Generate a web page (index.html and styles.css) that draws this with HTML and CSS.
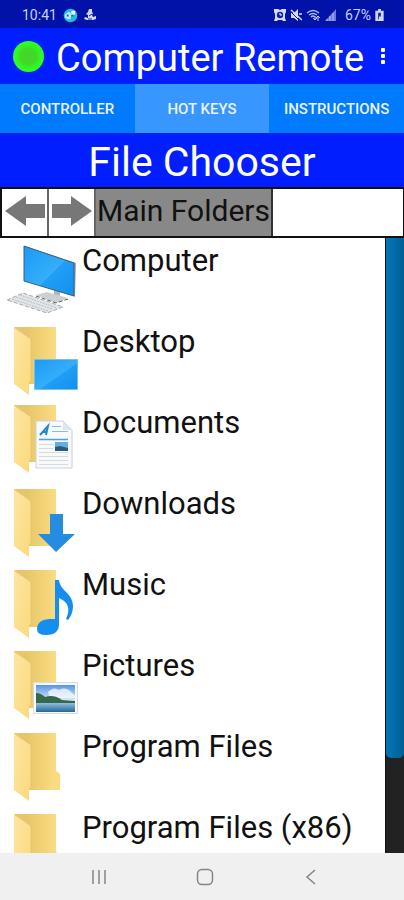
FILE: index.html
```html
<!DOCTYPE html>
<html lang="en">
<head>
<meta charset="utf-8">
<meta name="viewport" content="width=device-width, initial-scale=1">
<title>Computer Remote</title>
<link rel="stylesheet" href="styles.css">
</head>
<body>
<svg class="defs" aria-hidden="true">
  <defs>
    <linearGradient id="back" x1="0" y1="0" x2="1" y2="0"><stop offset=".3" stop-color="#e6c668"/><stop offset="1" stop-color="#fbdc83"/></linearGradient>
    <linearGradient id="flap" x1="0" y1="0" x2="1" y2="1"><stop offset="0" stop-color="#fde5a3"/><stop offset="1" stop-color="#fbda7c"/></linearGradient>
    <linearGradient id="screen" x1="0" y1="0" x2="1" y2="1"><stop offset="0" stop-color="#1b9bf6"/><stop offset=".55" stop-color="#35adfa"/><stop offset=".56" stop-color="#219ef6"/><stop offset="1" stop-color="#1190ee"/></linearGradient>
    <linearGradient id="sky" x1="0" y1="0" x2="0" y2="1"><stop offset="0" stop-color="#5795e6"/><stop offset="1" stop-color="#dff0fa"/></linearGradient>
    <linearGradient id="lake" x1="0" y1="0" x2="0" y2="1"><stop offset="0" stop-color="#8fc0dc"/><stop offset="1" stop-color="#25669a"/></linearGradient>
    <g id="folder">
      <path fill="url(#back)" d="M14 8H56V65H28L20 40Z"/>
      <path fill="url(#flap)" d="M14 8L31 20V61L29 63V76L14 65Z"/>
      <path fill="none" stroke="#e3c371" stroke-width=".8" d="M15 9L31 20V61"/>
    </g>
    <g id="open-folder">
      <use href="#folder"/>
      <path fill="#fadb80" d="M55 45L60 49V65H48Z"/>
    </g>
  </defs>
</svg>
<div class="screen">
  <div class="status">
    <span class="status-group">
      <span>10:41</span>
      <svg width="15" height="15" viewBox="0 0 16 16" aria-hidden="true"><circle cx="8" cy="8" r="7.300" fill="#27b8e8"/><path fill="#b9ecfb" d="M2 7L6 4L9 6L8 12H5L2 10Z"/><path fill="#126a9a" d="M4 7h2v2H4zM9 7h2v2H9z"/><path fill="#fff" d="M9 3h4v4H9z"/></svg>
      <svg width="12" height="12" viewBox="0 0 12 12" aria-hidden="true"><path fill="#cfd6ff" d="M5 0h3v3l1 1-1 2 1 2 3-1v3l-3 1H3L0 10l1-2 3 1V6L2 5l2-2z"/><path stroke="#1220a8" d="M5 7L8 5M4 10h4"/></svg>
    </span>
    <span class="status-group status-right">
      <svg width="12" height="12" viewBox="0 0 12 12" aria-hidden="true"><path fill="#d5dbff" d="M0 0h4l2 1 2-1h4v3l-1 2v4l1 3H9l-1-1H4l-1 1H0l1-3V5L0 3z"/><circle cx="6" cy="6" r="3.200" fill="#1320ac"/><path d="M6 4v2h2" stroke="#fff" fill="none"/></svg>
      <svg width="12" height="12" viewBox="0 0 12 12" aria-hidden="true"><path fill="#d5dbff" d="M1 4h3l4-4v12L4 9H1z"/><path d="M0 2L10 12" stroke="#0a18a6"/><path d="M1 1L12 11M9 5h3" stroke="#d5dbff" stroke-width="1.500"/></svg>
      <svg width="15" height="12" viewBox="0 0 15 12" aria-hidden="true"><path d="M1 4Q7-1 13 4M3 6Q7 3 11 6M5 8Q7 6 9 8" stroke="#aeb8f5" fill="none" stroke-width="1.400"/><path d="M9 11V7M7 9l2 2 2-2M12 7v5M10 9l2-2 2 2" stroke="#c5cdff" fill="none"/></svg>
      <svg width="12" height="12" viewBox="0 0 12 12" aria-hidden="true"><path fill="#6d7ad8" d="M11 0V12H0Z"/><path stroke="#b5bdf4" d="M2 12v-2M5 12V7M8 12V4"/></svg>
      <span class="charge">67%</span>
      <svg width="9" height="12" viewBox="0 0 9 13" aria-hidden="true"><path fill="#d0d7ff" d="M3 0h3v2h3v11H0V2h3z"/><path fill="#1826a9" d="M3 4h3v4H4v3H3z"/></svg>
    </span>
  </div>
  <header class="appbar">
    <span class="led"></span>
    <h1>Computer Remote</h1>
    <button class="menu" aria-label="More options"><svg width="6" height="18" viewBox="0 0 6 18" aria-hidden="true"><g fill="#fff"><rect x="1" y="1" width="4" height="4" rx="1"/><rect x="1" y="7" width="4" height="4" rx="1"/><rect x="1" y="13" width="4" height="4" rx="1"/></g></svg></button>
  </header>
  <nav class="tabs">
    <button>CONTROLLER</button>
    <button class="active">HOT KEYS</button>
    <button>INSTRUCTIONS</button>
  </nav>
  <h2>File Chooser</h2>
  <div class="path">
    <button class="arrow" aria-label="Back"><svg width="42" height="30" viewBox="0 0 42 30" aria-hidden="true"><path fill="#777" d="M1 15L22 0V8H41V22H22V30Z"/></svg></button>
    <button class="arrow" aria-label="Forward"><svg width="42" height="30" viewBox="0 0 42 30" aria-hidden="true"><path fill="#777" d="M41 15L20 0V8H1V22H20V30Z"/></svg></button>
    <button class="crumb">Main Folders</button>
  </div>
  <main class="files">
    <ul>
      <li><button><svg width="82" height="81" viewBox="0 0 82 81" aria-hidden="true">
        <path fill="#e3e6e8" stroke="#a3a9ad" stroke-dasharray="4 2" d="M7 62L23 55L63 69L47 75Z"/>
        <path stroke="#b9bec2" stroke-dasharray="2 1" fill="none" d="M12 61L48 73M16 59L52 71M20 57L57 70"/>
        <path fill="#aeb5ba" d="M54 50L60 52V60H54Z"/>
        <path fill="#cbd0d3" d="M36 57L47 54L68 60L56 65Z"/>
        <path fill="none" stroke="#596066" stroke-dasharray="4 2" d="M36 58L56 65L68 61"/>
        <path fill="#9ba6ad" d="M24 8L76 25L75 59L73 58V26Z"/>
        <path fill="url(#screen)" stroke="#375f7c" d="M24 8L74 25V58L24 43Z"/></svg><span>Computer</span></button></li>
      <li><button><svg width="82" height="81" viewBox="0 0 82 81" aria-hidden="true"><use href="#folder"/>
        <path fill="url(#screen)" stroke="#79bee9" d="M34.500 40.500H77.500V70.500H34.500Z"/></svg><span>Desktop</span></button></li>
      <li><button><svg width="82" height="81" viewBox="0 0 82 81" aria-hidden="true"><use href="#folder" y="-3"/>
        <path fill="#f7f9fb" stroke="#ccd2d8" d="M36 21H63L72 30V68H36Z"/><path fill="#dfe5ea" d="M63 21V30H72Z"/>
        <path stroke="#2489c9" stroke-width="2" fill="none" d="M40 35L48 26L46 35M42 32H47"/>
        <path stroke="#87bddd" fill="none" d="M52 26.500H61M52 31.500H68"/><path stroke="#4ea3d6" stroke-width="1.500" d="M39 39.500H68"/>
        <path stroke="#d5dade" fill="none" d="M39 44.500H53M39 48.500H53M39 52.500H68M39 56.500H68M39 60.500H68M39 64.500H68"/>
        <path fill="#64aee2" d="M55 42H68V51H55Z"/><path fill="#285d79" d="M55 47L60 46L68 48V51H55Z"/></svg><span>Documents</span></button></li>
      <li><button><svg width="82" height="81" viewBox="0 0 82 81" aria-hidden="true"><use href="#folder"/>
        <path fill="#268ce2" d="M50 33H63V53H75L56 71L38 53H50Z"/></svg><span>Downloads</span></button></li>
      <li><button><svg width="82" height="81" viewBox="0 0 82 81" aria-hidden="true"><use href="#folder"/>
        <path fill="#148ff0" d="M55 18H59C60 29 73 31 73 44Q73 52 68 58L66 57Q73 42 59 36V60Q60 73 46 73Q37 73 37 67Q37 58 49 57H55Z"/></svg><span>Music</span></button></li>
      <li><button><svg width="82" height="81" viewBox="0 0 82 81" aria-hidden="true"><use href="#folder"/>
        <path fill="#f7fafc" stroke="#d5dce1" d="M33.500 39.500H77.500V70.500H33.500Z"/><path fill="url(#sky)" d="M36 42H75V58H36Z"/>
        <path fill="#fff" opacity=".7" d="M48 49Q54 43 59 47Q66 43 72 50L75 52V55H50Z"/>
        <path fill="#36694c" d="M36 50Q41 50 45 54Q54 51 62 57L75 58V61H36Z"/><path fill="url(#lake)" d="M36 60H75V69H36Z"/></svg><span>Pictures</span></button></li>
      <li><button><svg width="82" height="81" viewBox="0 0 82 81" aria-hidden="true"><use href="#open-folder" y="1"/></svg><span>Program Files</span></button></li>
      <li><button><svg width="82" height="81" viewBox="0 0 82 81" aria-hidden="true"><use href="#open-folder" y="1"/></svg><span>Program Files (x86)</span></button></li>
    </ul>
    <div class="track"><div class="thumb"></div></div>
  </main>
  <nav class="sysnav">
    <button aria-label="Recent apps"><svg width="18" height="18" viewBox="0 0 18 18" aria-hidden="true"><path stroke="#858585" stroke-width="1.500" d="M3 2V16M9 2V16M15 2V16"/></svg></button>
    <button aria-label="Home"><svg width="18" height="18" viewBox="0 0 18 18" aria-hidden="true"><rect x="1.500" y="1.500" width="15" height="15" rx="4.500" fill="none" stroke="#858585" stroke-width="1.500"/></svg></button>
    <button aria-label="Back"><svg width="18" height="18" viewBox="0 0 18 18" aria-hidden="true"><path d="M13 2L5 9L13 16" fill="none" stroke="#858585" stroke-width="1.500"/></svg></button>
  </nav>
</div>
</body>
</html>
```
FILE: styles.css
```css
* { box-sizing: border-box; }
body { margin: 0; font-family: Roboto, "Liberation Sans", sans-serif; color: #111; background: #fff; }
button { margin: 0; padding: 0; border: 0; background: none; font: inherit; color: inherit; }
svg { display: block; flex: none; }
h1, h2, ul { margin: 0; padding: 0; font-weight: 400; }
.defs { position: absolute; width: 0; height: 0; }
.screen { display: flex; flex-direction: column; height: 100vh; }

.status { display: flex; justify-content: space-between; align-items: center; flex: none; height: 28px; padding: 2px 20px 0 22px; background: #0012a8; color: #c9d0ff; font-size: 14px; }
.status-group { display: flex; align-items: center; gap: 6px; }
.status-right { gap: 4px; }
.charge { margin-left: 4px; }

.appbar { display: flex; align-items: center; flex: none; height: 56px; padding: 0 16px 0 13px; background: #001eff; color: #fff; }
.led { flex: none; width: 31px; height: 31px; border-radius: 50%; background: radial-gradient(circle, #42d82b 35%, #2bff20 60%); }
h1 { flex: 1; margin-left: 12px; padding-top: 4px; font-size: 38px; line-height: 52px; white-space: nowrap; }
.menu { flex: none; padding: 0 2px; }

.tabs { display: grid; grid-template-columns: repeat(3, 1fr); flex: none; height: 49px; background: #007aff; color: #eaf4ff; font-size: 15px; font-weight: 500; }
.tabs .active { background: #3797ff; }

h2 { flex: none; padding-top: 4px; background: #001eff; color: #fff; font-size: 41px; line-height: 50px; text-align: center; }

.path { display: flex; flex: none; height: 51px; border: 2px solid #111; border-right-width: 1px; background: #fff; }
.arrow { display: flex; align-items: center; justify-content: center; width: 47px; padding-bottom: 4px; border-right: 2px solid #666; }
.crumb { padding: 0 1px 4px; border-right: 2px solid #333; background: #888; font-size: 30px; }

.files { display: flex; flex: 1; min-height: 0; overflow: hidden; }
.files ul { flex: 1; list-style: none; }
.files li button { display: flex; width: 100%; height: 81px; text-align: left; font-size: 31px; line-height: 45px; white-space: nowrap; }
.track { flex: none; width: 19px; background: #222; border-left: 1px solid #111; }
.thumb { height: 520px; border-radius: 0 0 5px 5px; background: linear-gradient(90deg, #0077b5, #005f96); }

.sysnav { display: flex; align-items: center; justify-content: space-between; flex: none; height: 47px; padding: 0 78px 0 84px; background: #f0f0f0; }
.sysnav button { padding: 6px; }
```
